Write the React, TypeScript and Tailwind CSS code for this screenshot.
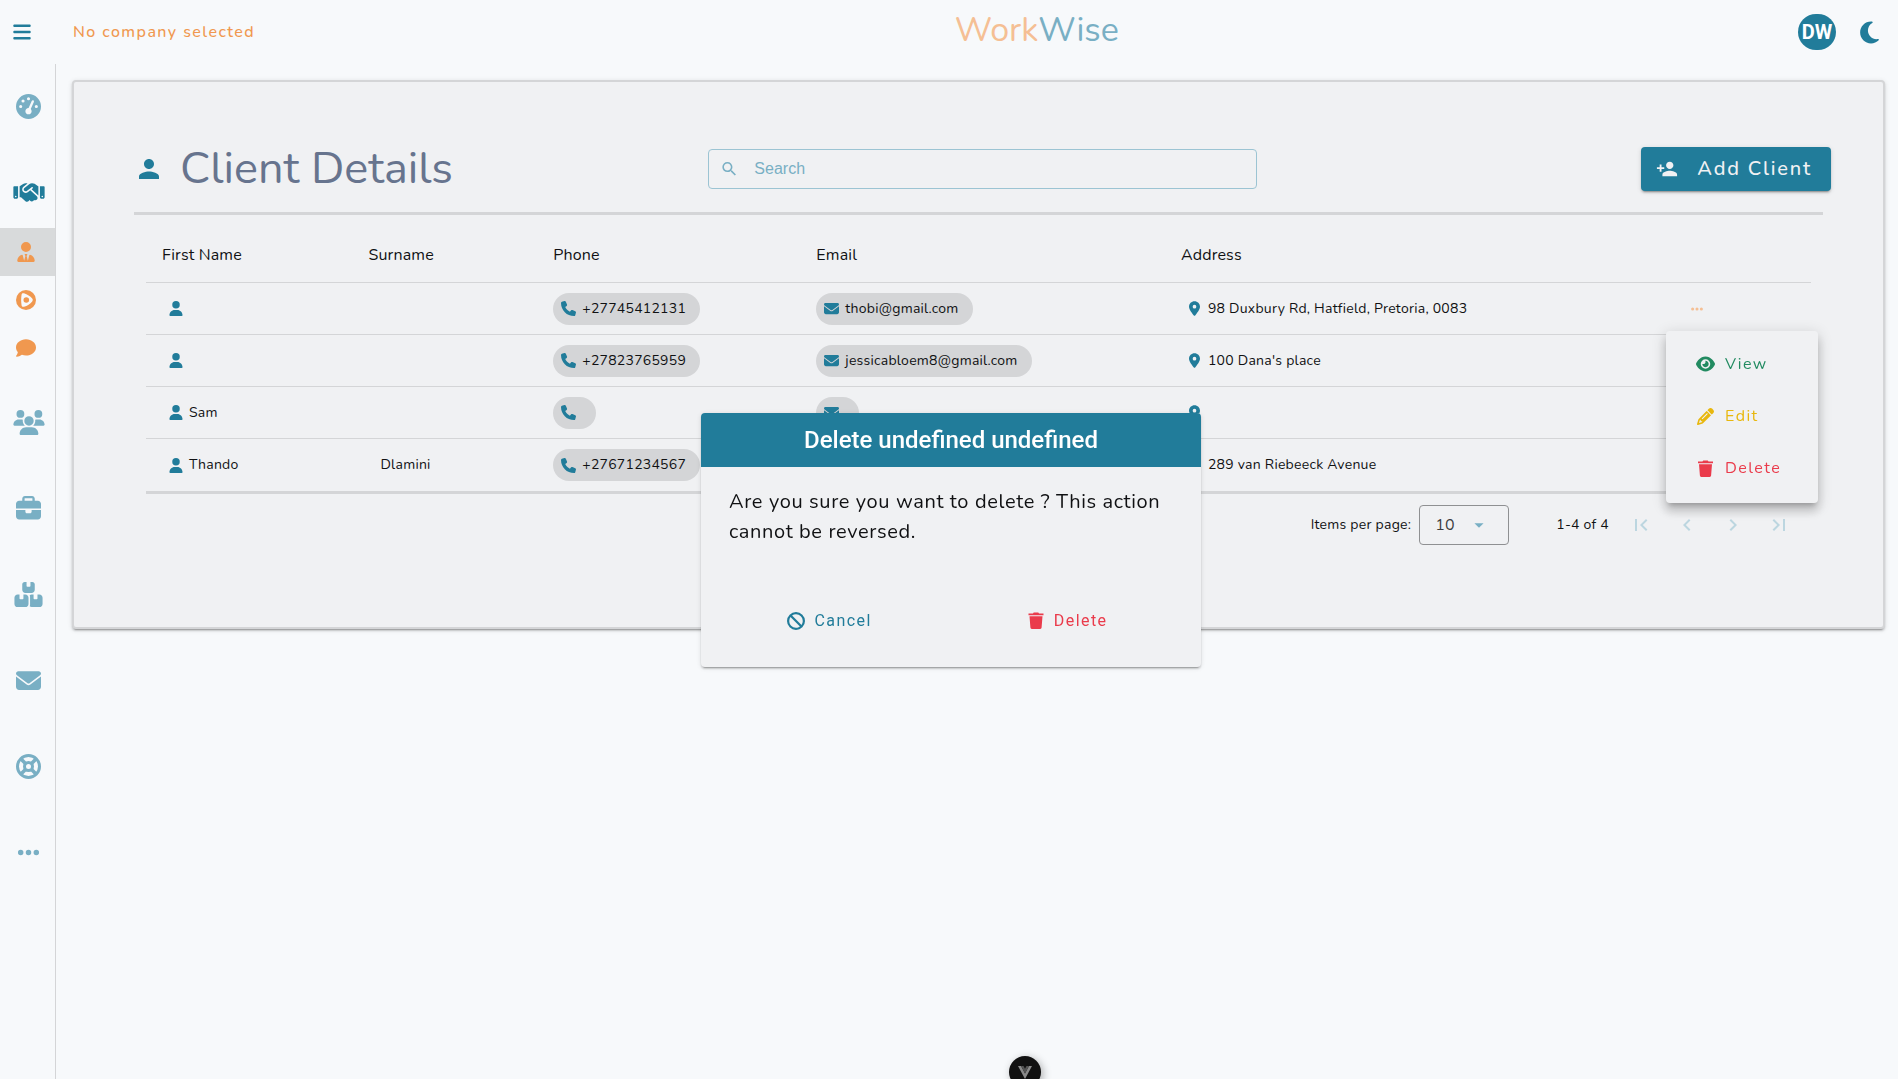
import type { ReactNode } from 'react';
import {
  FaBan,
  FaBars,
  FaBoxesStacked,
  FaBriefcase,
  FaComment,
  FaEllipsis,
  FaEnvelope,
  FaEye,
  FaGaugeHigh,
  FaHandshake,
  FaLocationDot,
  FaMoon,
  FaPencil,
  FaPhone,
  FaUser,
  FaUsers,
  FaUserTie,
} from 'react-icons/fa6';
import {
  MdArrowDropDown,
  MdChevronLeft,
  MdChevronRight,
  MdFirstPage,
  MdLastPage,
  MdPerson,
  MdPersonAdd,
  MdSearch,
} from 'react-icons/md';

const clients = [
  { first: '', last: '', phone: '+27745412131', email: 'thobi@gmail.com', address: '98 Duxbury Rd, Hatfield, Pretoria, 0083' },
  { first: '', last: '', phone: '+27823765959', email: 'jessicabloem8@gmail.com', address: "100 Dana's place" },
  { first: 'Sam', last: '', phone: '', email: '', address: '' },
  { first: 'Thando', last: 'Dlamini', phone: '+27671234567', email: 'thando@gmail.com', address: '289 van Riebeeck Avenue' },
];

function PlayRing() {
  return (
    <svg viewBox="0 0 20 20" className="size-5" aria-hidden="true">
      <circle cx="10" cy="10" r="10" fill="currentColor" />
      <path
        d="M5.600 4.600c.2-1.200 1.200-1.700 2.400-1.300 3.300 1 6.200 2.900 8.200 5.300.8.900.8 1.900 0 2.800-2 2.400-4.900 4.300-8.200 5.300-1.200.4-2.200-.1-2.400-1.300-.6-3.600-.6-7.200 0-10.800z"
        fill="#f7f9fb"
      />
      <circle cx="10.300" cy="10" r="2.800" fill="currentColor" />
    </svg>
  );
}

function LifeRing() {
  return (
    <svg viewBox="0 0 25 25" className="size-[25px]" fill="none" stroke="currentColor" aria-hidden="true">
      <circle cx="12.5" cy="12.5" r="11" strokeWidth="3" />
      <circle cx="12.5" cy="12.5" r="4" strokeWidth="3" />
      <path d="M9.700 9.700 4.500 4.500M15.300 9.700l5.200-5.200M9.700 15.300l-5.200 5.200M15.300 15.300l5.200 5.200" strokeWidth="3.6" />
    </svg>
  );
}

function Trash({ className }: { className: string }) {
  return (
    <svg viewBox="0 0 15 17" className={className} fill="currentColor" aria-hidden="true">
      <path d="M0 1.500h4.500L5.200.5h4.600l.7 1H15v1.800H0zM1 4.300h13l-.9 11.300c-.1.800-.6 1.400-1.400 1.400H3.300c-.8 0-1.300-.6-1.400-1.400z" />
    </svg>
  );
}

function SideItem({ label, children, className = '' }: { label: string; children: ReactNode; className?: string }) {
  return (
    <a href="#" aria-label={label} className={`flex h-12 items-center justify-center pl-0.5 ${className}`}>
      {children}
    </a>
  );
}

function SubItem({ label, active, children }: { label: string; active?: boolean; children: ReactNode }) {
  return (
    <a
      href="#"
      aria-label={label}
      className={`flex h-12 items-center pl-4 text-[#f0984f] ${active ? 'bg-[#d8dadb]' : ''}`}
    >
      <span className="flex w-5 justify-center">{children}</span>
    </a>
  );
}

function Chip({ icon, href, children }: { icon: ReactNode; href: string; children?: ReactNode }) {
  return (
    <a
      href={href}
      className="inline-flex h-8 items-center gap-1.5 rounded-2xl bg-[#d4d5d7] pr-3.5 pl-2 align-middle whitespace-nowrap"
    >
      <span className="text-[15px] text-[#217c9a]">{icon}</span>
      <span>{children}</span>
    </a>
  );
}

function RowMenu() {
  return (
    <div
      role="menu"
      className="absolute top-12 -right-[7px] z-10 flex w-[152px] flex-col rounded bg-[#f0f1f3] pt-[7px] pb-[9px] pl-[30px] text-base tracking-[0.0892em] shadow-[0_5px_5px_-3px_rgba(0,0,0,0.2),0_8px_10px_1px_rgba(0,0,0,0.14),0_3px_14px_2px_rgba(0,0,0,0.12)]"
    >
      <button type="button" role="menuitem" className="flex h-[52px] items-center gap-2.5 text-[#228b61]">
        <FaEye className="w-[19px] text-[18px]" />
        View
      </button>
      <button type="button" role="menuitem" className="flex h-[52px] items-center gap-2.5 text-[#e8b70d]">
        <FaPencil className="w-[19px] text-[17px]" />
        Edit
      </button>
      <button type="button" role="menuitem" className="flex h-[52px] items-center gap-2.5 text-[#ea3b4b]">
        <Trash className="h-[17px] w-[19px]" />
        Delete
      </button>
    </div>
  );
}

function Sidebar() {
  return (
    <nav className="w-14 shrink-0 border-r border-[#d4d5d7] pt-[18px] text-[25px] text-[#79afc4]">
      <SideItem label="Dashboard" className="mb-[38px]"><FaGaugeHigh /></SideItem>
      <SideItem label="Clients" className="mb-3 text-[#217c9a]"><FaHandshake className="w-8" /></SideItem>
      <div className="mb-[26px]">
        <SubItem label="Client details" active><FaUserTie className="text-[20px]" /></SubItem>
        <SubItem label="Client desk"><PlayRing /></SubItem>
        <SubItem label="Client feedback"><FaComment className="text-[20px]" /></SubItem>
      </div>
      <div className="flex flex-col gap-[38px]">
        <SideItem label="Employees"><FaUsers className="w-8" /></SideItem>
        <SideItem label="Jobs"><FaBriefcase /></SideItem>
        <SideItem label="Inventory"><FaBoxesStacked className="w-[29px]" /></SideItem>
        <SideItem label="Inbox"><FaEnvelope /></SideItem>
        <SideItem label="Support"><LifeRing /></SideItem>
        <SideItem label="More"><FaEllipsis /></SideItem>
      </div>
    </nav>
  );
}

function ClientTable() {
  return (
    <table className="w-full table-fixed border-separate border-spacing-0 text-left text-sm tracking-[0.0178em] text-[#101113]">
      <colgroup>
        <col className="w-[12.4%]" />
        <col className="w-[11.1%]" />
        <col className="w-[15.8%]" />
        <col className="w-[21.9%]" />
        <col />
        <col className="w-[13.7%]" />
      </colgroup>
      <thead>
        <tr className="h-14 text-base tracking-[0.0094em]">
          {['First Name', 'Surname', 'Phone', 'Email', 'Address', ''].map((h) => (
            <th key={h} scope="col" className="border-b border-[#d4d5d7] px-4 font-normal">{h}</th>
          ))}
        </tr>
      </thead>
      <tbody className="[&_td]:border-b [&_td]:border-[#d4d5d7] [&_td]:px-4 [&_td]:py-0 [&>tr:last-child>td]:border-b-[3px]">
        {clients.map((c, i) => (
          <tr key={i} className="h-[52px] last:h-[55px]">
            <td>
              <div className="flex items-center gap-1.5 pl-[7px]">
                <FaUser className="w-[14px] text-[15px] text-[#217c9a]" />
                {c.first}
              </div>
            </td>
            <td><div className="pl-3">{c.last}</div></td>
            <td><Chip icon={<FaPhone />} href={`tel:${c.phone}`}>{c.phone}</Chip></td>
            <td><Chip icon={<FaEnvelope />} href={`mailto:${c.email}`}>{c.email}</Chip></td>
            <td>
              <div className="flex items-center gap-2 pl-2">
                <FaLocationDot className="w-[11px] text-[15px] text-[#217c9a]" />
                {c.address}
              </div>
            </td>
            <td className="relative">
              {i === 0 && (
                <>
                  <button type="button" aria-label="Row actions" aria-expanded="true" className="mx-auto flex text-[#f5bf94]">
                    <FaEllipsis className="text-[14px]" />
                  </button>
                  <RowMenu />
                </>
              )}
            </td>
          </tr>
        ))}
      </tbody>
    </table>
  );
}

function Paginator() {
  return (
    <div className="flex items-center justify-end pt-[11px] pr-5 text-sm tracking-[0.0178em] text-[#101113]">
      <label htmlFor="page-size">Items per page:</label>
      <div className="relative mr-[47px] ml-2 h-10 w-[90px] rounded border border-[#8f9092]">
        <select
          id="page-size"
          defaultValue="10"
          className="h-full w-full appearance-none bg-transparent pl-[15px] text-base text-[#3c3d3f] outline-none"
        >
          <option>10</option>
          <option>25</option>
        </select>
        <MdArrowDropDown className="pointer-events-none absolute top-2 right-[18px] text-[22px] text-[#79afc4]" />
      </div>
      <span className="mr-5">1-4 of 4</span>
      <div className="flex gap-[22px] text-2xl text-[#bcd6e0]">
        <button type="button" aria-label="First page" disabled><MdFirstPage /></button>
        <button type="button" aria-label="Previous page" disabled><MdChevronLeft /></button>
        <button type="button" aria-label="Next page" disabled><MdChevronRight /></button>
        <button type="button" aria-label="Last page" disabled><MdLastPage /></button>
      </div>
    </div>
  );
}

function DeleteDialog() {
  return (
    <div className="pointer-events-none fixed inset-0 grid place-items-center pl-1">
      <div
        role="dialog"
        aria-labelledby="dialog-title"
        className="pointer-events-auto w-[500px] overflow-hidden rounded bg-[#f0f1f3] shadow-[0_3px_1px_-2px_rgba(0,0,0,0.2),0_2px_2px_0_rgba(0,0,0,0.14),0_1px_5px_0_rgba(0,0,0,0.12)]"
      >
        <h2
          id="dialog-title"
          className="flex h-[54px] items-center justify-center bg-[#217c9a] font-['Roboto',sans-serif] text-2xl font-medium text-white"
        >
          Delete undefined undefined
        </h2>
        <p className="px-7 pt-5 text-xl leading-[30px] tracking-[0.03125em] text-[#101113]">
          Are you sure you want to delete ? This action cannot be reversed.
        </p>
        <div className="flex justify-center gap-[124px] pt-14 pr-2 pb-7 font-['Roboto',sans-serif] tracking-[0.0892em]">
          <button type="button" className="flex h-9 items-center gap-2.5 px-4 text-[#217c9a]">
            <FaBan className="text-[18px]" />
            Cancel
          </button>
          <button type="button" className="flex h-9 items-center gap-2.5 px-4 text-[#ea3b4b]">
            <Trash className="h-[17px] w-4" />
            Delete
          </button>
        </div>
      </div>
    </div>
  );
}

export default function App() {
  return (
    <div className="flex min-h-screen flex-col bg-[#f7f9fb] font-['Nunito','Lato',sans-serif]">
      <header className="grid h-16 grid-cols-[21fr_auto_17fr] items-center pr-4 pl-3">
        <div className="flex items-center gap-[41px]">
          <button type="button" aria-label="Menu" className="text-[#217c9a]"><FaBars className="text-[20px]" /></button>
          <span className="font-medium tracking-[0.0892em] text-[#f0984f]">No company selected</span>
        </div>
        <div className="pb-1 text-[34px] leading-10 text-[#79afc4]">
          <span className="text-[#f5bf94]">Work</span>Wise
        </div>
        <div className="flex items-center justify-end gap-[21px] text-[#217c9a]">
          <button
            type="button"
            className="flex h-9 w-[38px] items-center justify-center rounded-full bg-[#217c9a] font-['Roboto',sans-serif] text-xl font-bold text-white"
          >
            DW
          </button>
          <button type="button" aria-label="Dark mode"><FaMoon className="text-[25px]" /></button>
        </div>
      </header>

      <div className="flex flex-1">
        <Sidebar />
        <main className="min-w-0 flex-1 pt-4 pr-[13px] pl-4">
          <section className="rounded border-2 border-[#d4d5d7] bg-[#f0f1f3] px-[60px] pt-16 pb-[82px] shadow-[0_3px_1px_-2px_rgba(0,0,0,0.2),0_2px_2px_0_rgba(0,0,0,0.14),0_1px_5px_0_rgba(0,0,0,0.12)]">
            <div className="-mr-2 mb-5 grid h-[46px] grid-cols-3 items-center">
              <h1 className="flex items-center gap-4 text-[45px] leading-[46px] font-normal whitespace-nowrap text-[#67748e]">
                <MdPerson className="text-[30px] text-[#217c9a]" />
                Client Details
              </h1>
              <div className="px-2">
                <label className="flex h-10 items-center gap-4 rounded border border-[#9cc4d3] px-[11px] text-[#79afc4]">
                  <MdSearch className="text-xl" />
                  <input
                    type="text"
                    placeholder="Search"
                    aria-label="Search"
                    className="w-full bg-transparent font-['Liberation_Sans',sans-serif] text-base outline-none placeholder:text-[#79afc4]"
                  />
                </label>
              </div>
              <button
                type="button"
                className="flex h-11 items-center gap-[19px] justify-self-end rounded bg-[#217c9a] pr-[19px] pl-[15px] text-xl font-medium tracking-[0.0892em] text-[#f0f1f3] shadow-[0_3px_1px_-2px_rgba(0,0,0,0.2),0_2px_2px_0_rgba(0,0,0,0.14),0_1px_5px_0_rgba(0,0,0,0.12)]"
              >
                <MdPersonAdd className="text-[22px]" />
                Add Client
              </button>
            </div>
            <hr className="border-t-[3px] border-[#d4d5d7]" />
            <div className="px-3 pt-3">
              <ClientTable />
              <Paginator />
            </div>
          </section>
        </main>
      </div>

      <DeleteDialog />

      <button
        type="button"
        aria-label="Toggle devtools"
        className="fixed -bottom-[9px] left-[54%] flex size-8 -translate-x-1/2 items-center justify-center rounded-full bg-[#111111] shadow-[2px_2px_8px_rgba(0,0,0,0.3)]"
      >
        <svg viewBox="0 0 14 13" className="h-[13px] w-3.5" aria-hidden="true">
          <path d="M0 0h3l4 7.500L11 0h3L7 13z" fill="#8a8a8a" />
          <path d="M3 0h2.500L7 2.800 8.500 0H11L7 7.500z" fill="#555555" />
        </svg>
      </button>
    </div>
  );
}
